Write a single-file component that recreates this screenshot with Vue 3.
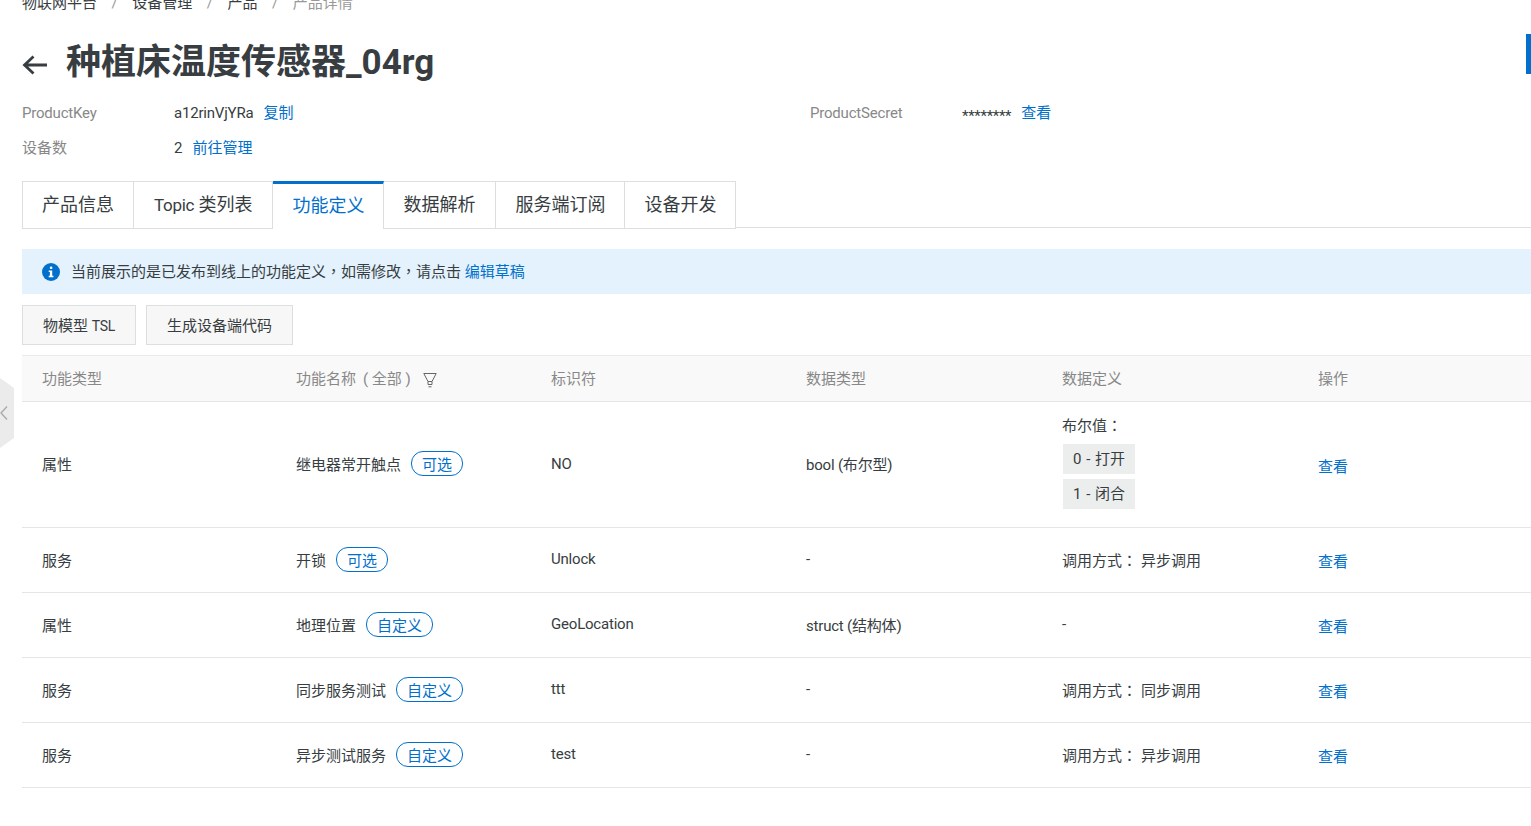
<script setup>
const tabs = [
  { text: "产品信息" },
  { latin: "Topic", text: " 类列表" },
  { text: "功能定义", active: true },
  { text: "数据解析" },
  { text: "服务端订阅" },
  { text: "设备开发" },
];
const columns = ["功能类型", "功能名称", "标识符", "数据类型", "数据定义", "操作"];
const rows = [
  { kind: "属性", name: "继电器常开触点", tag: "可选", id: "NO", type: "bool (布尔型)", bools: ["0 - 打开", "1 - 闭合"] },
  { kind: "服务", name: "开锁", tag: "可选", id: "Unlock", type: "-", call: "异步调用" },
  { kind: "属性", name: "地理位置", tag: "自定义", id: "GeoLocation", type: "struct (结构体)", def: "-" },
  { kind: "服务", name: "同步服务测试", tag: "自定义", id: "ttt", type: "-", call: "同步调用" },
  { kind: "服务", name: "异步测试服务", tag: "自定义", id: "test", type: "-", call: "异步调用" },
];
</script>

<template>
  <div class="page">
    <div class="side-handle">
      <svg width="10" height="16" viewBox="0 0 10 16"><path d="M7 1.500 1 8l6 6.500" fill="none" stroke="#a8a8a8" stroke-width="1.300" /></svg>
    </div>
    <div class="side-tab"></div>

    <div class="crumbs">
      <span>物联网平台</span><i>/</i><span>设备管理</span><i>/</i><span>产品</span><i>/</i><span class="last">产品详情</span>
    </div>

    <div class="title">
      <svg class="back" width="26" height="22" viewBox="0 0 26 22">
        <path d="M25 11H2.500M11.500 2.500 2.500 11l9 8.500" fill="none" stroke="#373d41" stroke-width="2.800" />
      </svg>
      <h1>种植床温度传感器_04rg</h1>
    </div>

    <div class="info">
      <div class="info-row">
        <span class="label narrow">ProductKey</span>
        <span class="narrow">a12rinVjYRa</span><a class="link">复制</a>
      </div>
      <div class="info-row">
        <span class="label narrow">ProductSecret</span>
        <span class="stars">********</span><a class="link">查看</a>
      </div>
      <div class="info-row">
        <span class="label">设备数</span>
        <span>2</span><a class="link">前往管理</a>
      </div>
    </div>

    <div class="tabs">
      <div v-for="t in tabs" :key="t.text" :class="['tab', { active: t.active }]">
        <span v-if="t.latin" class="latin">{{ t.latin }}</span>{{ t.text }}
      </div>
    </div>

    <div class="notice">
      <svg width="18" height="18" viewBox="0 0 18 18">
        <circle cx="9" cy="9" r="9" fill="#0070cc" />
        <rect x="7.800" y="3.500" width="2.600" height="2.600" rx="1.200" fill="#fff" />
        <path d="M6.700 7.400h3.500v5.400h1.200v1.500H6.700v-1.500h1.200V8.900H6.700z" fill="#fff" />
      </svg>
      <span class="notice-text">当前展示的是已发布到线上的功能定义<span class="punct">，</span>如需修改<span class="punct">，</span>请点击 <a>编辑草稿</a></span>
    </div>

    <div class="actions">
      <button>物模型 <span class="tsl">TSL</span></button>
      <button>生成设备端代码</button>
    </div>

    <div class="table">
      <div class="tr head">
        <div v-for="c in columns" :key="c" class="td">
          {{ c }}
          <template v-if="c === '功能名称'">
            <span class="all">( 全部 )</span>
            <svg width="14" height="16" viewBox="0 0 14 16">
              <path d="M.8 1.500h12.400L9 9.500H5zM5 9.500v3M9 9.500v3M5 12.500h4M5.500 14.800h3" fill="none" stroke="#666" stroke-width="1" />
            </svg>
          </template>
        </div>
      </div>
      <div v-for="r in rows" :key="r.id" class="tr" :class="{ tall: r.bools }">
        <div class="td">{{ r.kind }}</div>
        <div class="td">{{ r.name }}<span class="tag">{{ r.tag }}</span></div>
        <div class="td narrow">{{ r.id }}</div>
        <div class="td narrow">{{ r.type }}</div>
        <div class="td" v-if="r.bools">
          <div class="bools">
            <div>布尔值<span class="punct">：</span></div>
            <span v-for="b in r.bools" :key="b" class="bool">{{ b }}</span>
          </div>
        </div>
        <div class="td" v-else-if="r.call">调用方式<span class="punct call">：</span>{{ r.call }}</div>
        <div class="td" v-else>{{ r.def }}</div>
        <div class="td"><a class="view">查看</a></div>
      </div>
    </div>
  </div>
</template>

<style scoped>
.page {
  position: relative;
  height: 826px;
  box-sizing: border-box;
  padding-left: 22px;
  overflow: hidden;
  color: #373d41;
  font-family: Roboto, "Noto Sans CJK SC", sans-serif;
  font-size: 15px;
}

a {
  color: #0070cc;
}

.punct {
  font-family: "Noto Sans CJK TC", sans-serif;
}

.punct.call {
  margin-right: 4px;
}

.narrow {
  letter-spacing: -0.2px;
}

.side-handle {
  position: absolute;
  left: 0;
  top: 378px;
  width: 14px;
  height: 70px;
  display: flex;
  align-items: center;
  background: #ebebeb;
  clip-path: polygon(0 0, 100% 10px, 100% 60px, 0 100%);
}

.side-tab {
  position: absolute;
  right: 0;
  top: 34px;
  width: 5px;
  height: 40px;
  background: #0070cc;
}

.crumbs {
  display: flex;
  height: 20px;
  line-height: 20px;
  margin-top: -7px;
}

.crumbs i {
  font-style: normal;
  color: #999;
  margin: 0 14.500px;
}

.crumbs .last {
  color: #999;
}

.title {
  display: flex;
  align-items: center;
  height: 48px;
  margin-top: 26px;
}

.back {
  margin-right: 18px;
  margin-top: 3px;
}

h1 {
  margin: 0;
  font-size: 35px;
  line-height: 48px;
  font-weight: 700;
}

.info {
  display: grid;
  grid-template-columns: 788px 1fr;
  margin-top: 16px;
  row-gap: 15px;
}

.info-row {
  display: flex;
  height: 20px;
  line-height: 20px;
}

.label {
  width: 152px;
  color: #888;
}

.stars {
  letter-spacing: -0.300px;
  padding-top: 3px;
}

.link {
  margin-left: 10px;
}

.tabs {
  display: flex;
  margin-top: 23px;
  height: 46px;
  border-bottom: 1px solid #dcdfe0;
}

.tab {
  height: 48px;
  padding: 0 18px 0 20px;
  line-height: 46px;
  font-size: 18px;
  border: 1px solid #dcdfe0;
  border-left: 0;
  box-sizing: border-box;
  background: #fff;
  white-space: pre;
}

.tab:first-child {
  padding: 0 19px;
  border-left: 1px solid #dcdfe0;
}

.tab:nth-child(2),
.tab:nth-child(4) {
  padding-right: 19px;
}

.latin {
  font-size: 17px;
  letter-spacing: -0.300px;
}

.tab.active {
  color: #0070cc;
  border-top: 3px solid #0070cc;
  border-bottom: 0;
  line-height: 43px;
}

.notice {
  display: flex;
  align-items: center;
  gap: 11px;
  height: 45px;
  margin-top: 21px;
  padding-left: 20px;
  background: #e3f2fd;
}

.notice-text {
  padding-bottom: 2px;
}

.actions {
  display: flex;
  gap: 10px;
  margin-top: 11px;
}

button {
  height: 40px;
  padding: 0 20px 2px;
  border: 1px solid #dcdfe0;
  background: #f7f7f7;
  color: #373d41;
  font: inherit;
}

.tsl {
  font-size: 14px;
  letter-spacing: -0.300px;
}

.table {
  margin-top: 10px;
  border-top: 1px solid #e8eaeb;
}

.tr {
  display: grid;
  grid-template-columns: 254px 255px 255px 256px 256px 1fr;
  height: 65px;
  box-sizing: border-box;
  border-bottom: 1px solid #e3e5e6;
}

.tr.tall {
  height: 126px;
}

.tr.head {
  height: 46px;
  background: #f9f9f9;
  color: #888;
}

.td {
  display: flex;
  align-items: center;
  padding: 0 0 2px 20px;
}

.all {
  margin-left: 7px;
}

.td svg {
  margin-left: 12px;
  margin-top: 5px;
}

.tag {
  margin-left: 10px;
  height: 23px;
  line-height: 27px;
  padding: 0 10px;
  color: #0070cc;
  border: 1px solid #0070cc;
  border-radius: 12px;
}

.bools {
  display: flex;
  flex-direction: column;
  align-items: flex-start;
  margin-top: -4px;
}

.bools > div {
  height: 20px;
  line-height: 20px;
  margin-bottom: 9px;
}

.bool {
  height: 30px;
  line-height: 30px;
  margin-left: 1px;
  padding: 0 10px;
  margin-bottom: 5px;
  background: #eceded;
  word-spacing: 1px;
}

.bool:last-child {
  margin-bottom: 0;
}

.view {
  margin-top: 3px;
}
</style>

<style>
html,
body {
  background: #fff;
}
</style>
